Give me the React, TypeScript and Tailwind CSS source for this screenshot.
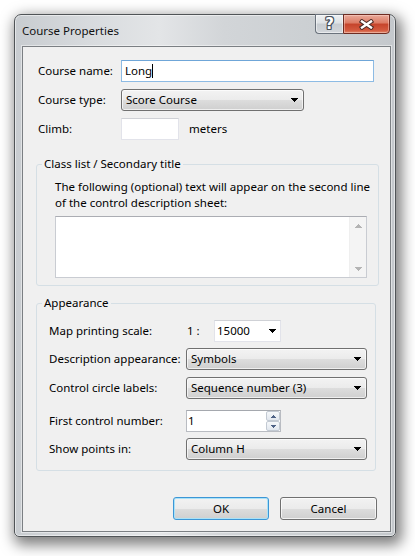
import React from "react";

function Arrow({ color = "#000" }: { color?: string }) {
  return (
    <svg width="7" height="4" viewBox="0 0 7 4" shapeRendering="crispEdges">
      <path d="M0 0h7v1h-1v1h-1v1h-1v1h-1v-1h-1v-1h-1v-1h-1z" fill={color} />
    </svg>
  );
}

function UpArrow({ color }: { color: string }) {
  return (
    <svg width="7" height="4" viewBox="0 0 7 4" shapeRendering="crispEdges">
      <path d="M0 4h7v-1h-1v-1h-1v-1h-1v-1h-1v1h-1v1h-1v1h-1z" fill={color} />
    </svg>
  );
}

function Select({ value, className }: { value: string; className: string }) {
  return (
    <div
      className={`${className} h-[22px] flex items-center pl-[4px] pr-[5px] rounded-[3px] border border-[#707070] bg-[linear-gradient(#f3f3f3_0%,#ebebeb_50%,#dddddd_51%,#cfcfcf_100%)] shadow-[inset_0_0_0_1px_rgba(255,255,255,0.65)]`}
    >
      <span className="flex-1">{value}</span>
      <Arrow />
    </div>
  );
}

function Button({ label, def }: { label: string; def?: boolean }) {
  return (
    <div
      className={
        def
          ? "h-[23px] w-[96px] flex items-center justify-center rounded-[3px] border border-[#3c96d6] bg-[linear-gradient(#f2f2f2_0%,#ebebeb_50%,#dddddd_51%,#cfcfcf_100%)] shadow-[inset_0_0_0_1px_#a9e2f8]"
          : "h-[23px] w-[97px] flex items-center justify-center rounded-[3px] border border-[#707070] bg-[linear-gradient(#f2f2f2_0%,#ebebeb_50%,#dddddd_51%,#cfcfcf_100%)] shadow-[inset_0_0_0_1px_rgba(255,255,255,0.7)]"
      }
    >
      {label}
    </div>
  );
}

export default function App() {
  return (
    <div className="w-[415px] h-[556px] bg-white pl-[14px] pt-[14px] font-['Noto_Sans',sans-serif] text-[11.5px] leading-[16px] text-black">
      <div className="w-[382px] h-[523px] flex flex-col rounded-t-[7px] rounded-b-[5px] border border-[#505457] bg-[linear-gradient(90deg,#c8ccd0_0%,#d8dbde_20%,#e3e5e7_38%,#d2d5d8_55%,#cbcfd2_80%,#c4c8cc_100%)] shadow-[3px_5px_14px_3px_rgba(0,0,0,0.5),inset_0_0_0_1px_rgba(255,255,255,0.5)]">
        {/* title bar */}
        <div className="h-[31px] flex pl-[7px] pr-[5px]">
          <div className="self-center pt-[1px] text-[#111]">Course Properties</div>
          <div className="ml-auto -mt-[1px] flex h-[20px]">
            <div className="w-[28px] h-[20px] flex items-center justify-center rounded-bl-[4px] border border-[#6a727c] border-r-0 bg-[linear-gradient(#eef0f2_0%,#dde1e4_45%,#c7ccd1_50%,#d2d6da_100%)] shadow-[inset_0_0_0_1px_rgba(255,255,255,0.5)]">
              <span className="font-['DejaVu_Sans',sans-serif] font-bold text-[15px] leading-[15px] text-white [text-shadow:1px_0_#4a525c,-1px_0_#4a525c,0_1px_#4a525c,0_-1px_#4a525c,1px_1px_#4a525c,-1px_-1px_#4a525c,1px_-1px_#4a525c,-1px_1px_#4a525c]">
                ?
              </span>
            </div>
            <div className="w-[47px] h-[20px] flex items-center justify-center rounded-br-[4px] border border-[#6e2c22] bg-[linear-gradient(#e9a99a_0%,#dc7a63_45%,#c5442b_50%,#d45a3f_85%,#e0876a_100%)] shadow-[inset_0_0_0_1px_rgba(255,220,210,0.45)]">
              <svg width="15" height="11" viewBox="0 0 15 11">
                <path d="M3 2.5L12 8.5M12 2.5L3 8.5" stroke="#4a2a26" strokeWidth="4.4" strokeLinecap="square" />
                <path d="M3 2.5L12 8.5M12 2.5L3 8.5" stroke="#ffffff" strokeWidth="2.4" strokeLinecap="square" />
              </svg>
            </div>
          </div>
        </div>

        {/* client area */}
        <div className="ml-[7px] mr-[4px] h-[486px] border border-[#7b7f83] bg-[#f0f0f0] flex flex-col shadow-[0_0_0_1px_rgba(255,255,255,0.45)]">
          <div className="mt-[13px] flex items-center pl-[15px] h-[22px]">
            <span className="w-[83px]">Course name:</span>
            <div className="w-[253px] h-[22px] border border-[#8dbbe4] border-t-[#6fa6d8] bg-white flex items-center pl-[3px]">
              <span>Long</span>
              <span className="w-px h-[14px] bg-black" />
            </div>
          </div>
          <div className="mt-[7px] flex items-center pl-[15px] h-[22px]">
            <span className="w-[83px]">Course type:</span>
            <Select value="Score Course" className="w-[183px]" />
          </div>
          <div className="mt-[7px] flex items-center pl-[15px] h-[22px]">
            <span className="w-[83px]">Climb:</span>
            <div className="w-[58px] h-[22px] border border-[#e2e3ea] border-t-[#cfd1d6] bg-white" />
            <span className="ml-[10px]">meters</span>
          </div>

          <fieldset className="mt-[16px] ml-[13px] w-[340px] border border-[#d5dfe5] rounded-[3px]">
            <legend className="ml-[5px] px-[2px] leading-[16px]">Class list / Secondary title</legend>
            <div className="pl-[18px] pr-[8px] pt-[7px] pb-[7px]">
              <p className="leading-[16px] whitespace-nowrap">
                The following (optional) text will appear on the second line
                <br />
                of the control description sheet:
              </p>
              <div className="mt-[5px] h-[62px] w-[312px] border border-[#c9ccd2] border-t-[#abadb3] bg-white flex justify-end">
                <div className="w-[17px] bg-[#f4f4f4] flex flex-col justify-between border-l border-[#efefef]">
                  <div className="h-[17px] flex items-center justify-center">
                    <UpArrow color="#b4b4b4" />
                  </div>
                  <div className="h-[17px] flex items-center justify-center">
                    <Arrow color="#b4b4b4" />
                  </div>
                </div>
              </div>
            </div>
          </fieldset>

          <fieldset className="mt-[9px] ml-[13px] w-[340px] border border-[#d5dfe5] rounded-[3px]">
            <legend className="ml-[5px] px-[2px] leading-[16px]">Appearance</legend>
            <div className="pl-[12px] pt-[9px] pb-[10px]">
              <div className="flex items-center h-[22px]">
                <span className="w-[137px]">Map printing scale:</span>
                <span className="w-[28px] pl-[1px]">1 :</span>
                <div className="w-[67px] h-[22px] border border-[#e2e3ea] border-t-[#cfd1d6] bg-white flex items-center pl-[2px] pr-[4px]">
                  <span className="flex-1">15000</span>
                  <Arrow />
                </div>
              </div>
              <div className="mt-[6px] flex items-center h-[22px]">
                <span className="w-[137px]">Description appearance:</span>
                <Select value="Symbols" className="w-[181px]" />
              </div>
              <div className="mt-[7px] flex items-center h-[22px]">
                <span className="w-[137px]">Control circle labels:</span>
                <Select value="Sequence number (3)" className="w-[181px]" />
              </div>
              <div className="mt-[11px] flex items-center h-[22px]">
                <span className="w-[137px]">First control number:</span>
                <div className="w-[95px] h-[22px] border border-[#b9bcc2] border-t-[#a5a8ae] bg-white flex items-center">
                  <span className="flex-1 pl-[1px]">1</span>
                  <div className="w-[14px] h-[20px] flex flex-col">
                    <div className="h-[10px] flex items-center justify-center rounded-[2px] border border-[#c3cad3] bg-[linear-gradient(#f6f8fa,#e2e7ee)]">
                      <svg width="5" height="3" viewBox="0 0 5 3" shapeRendering="crispEdges">
                        <path d="M0 3h5v-1h-1v-1h-1v-1h-1v1h-1v1h-1z" fill="#4d6185" />
                      </svg>
                    </div>
                    <div className="h-[10px] flex items-center justify-center rounded-[2px] border border-[#c3cad3] bg-[linear-gradient(#f6f8fa,#e2e7ee)]">
                      <svg width="5" height="3" viewBox="0 0 5 3" shapeRendering="crispEdges">
                        <path d="M0 0h5v1h-1v1h-1v1h-1v-1h-1v-1h-1z" fill="#4d6185" />
                      </svg>
                    </div>
                  </div>
                </div>
              </div>
              <div className="mt-[6px] flex items-center h-[22px]">
                <span className="w-[137px]">Show points in:</span>
                <Select value="Column H" className="w-[181px]" />
              </div>
            </div>
          </fieldset>

          <div className="mt-[26px] flex justify-end gap-[11px] pr-[13px]">
            <Button label="OK" def />
            <Button label="Cancel" />
          </div>
        </div>
      </div>
    </div>
  );
}
